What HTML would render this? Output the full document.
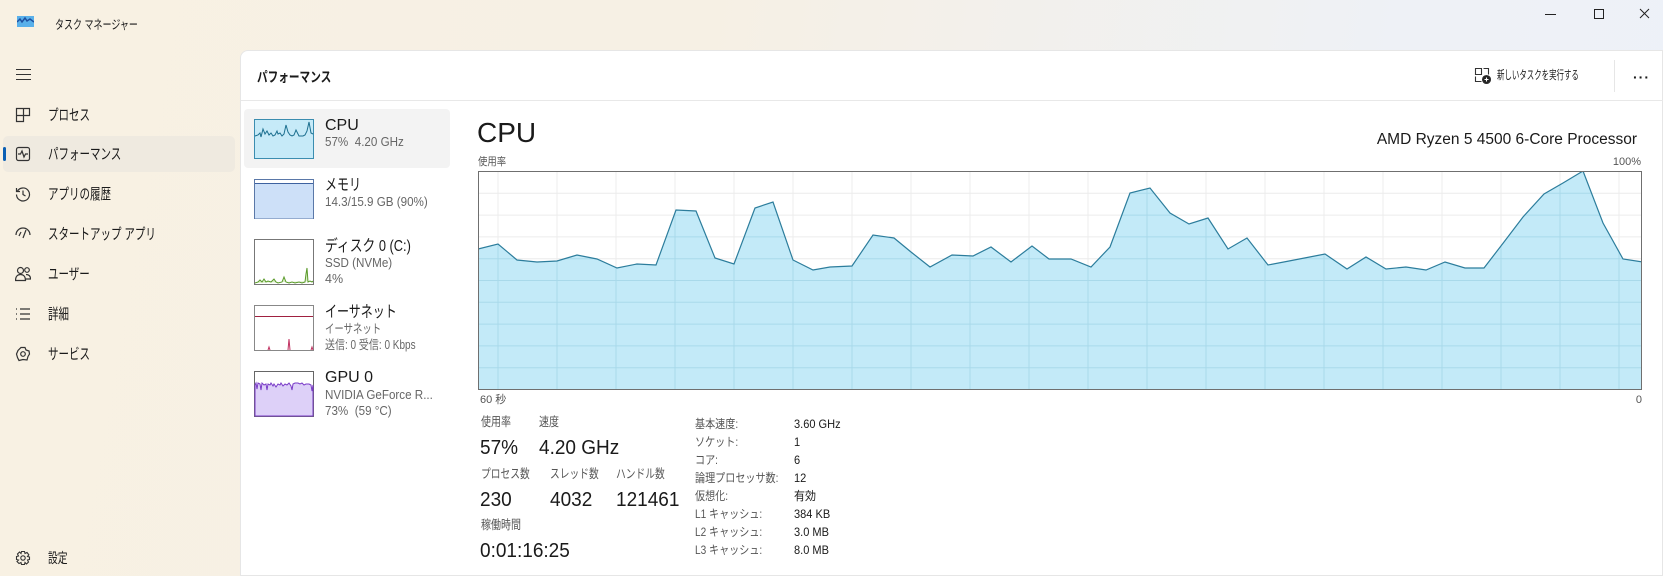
<!DOCTYPE html>
<html><head><meta charset="utf-8"><style>
*{margin:0;padding:0;box-sizing:border-box}
body{width:1663px;height:576px;overflow:hidden;position:relative;font-family:"Liberation Sans","Noto Sans CJK JP",sans-serif;color:#1a1a1a;background:linear-gradient(100deg,#f8f1e3 0%,#f6f0e4 40%,#eef1f6 80%,#edf1f8 100%)}
.a{position:absolute;white-space:nowrap;line-height:1.25;transform-origin:left top}
.nav{font-size:15px;left:48px;transform:scaleX(.7)}
.ic{position:absolute;left:15px}
.panel{position:absolute;left:240px;top:50px;width:1423px;height:526px;background:#fff;border-top-left-radius:8px;border:1px solid #e6e6e6}
.t2{font-size:12.5px;color:#666}
.lab{font-size:12.5px;color:#555}
.big{font-size:20px;color:#1a1a1a}
.rl{font-size:12px;color:#555;left:695px;transform:scaleX(.84)}
.rv{font-size:12px;color:#1a1a1a;left:794px;transform:scaleX(.92)}
</style></head><body>
<!-- title bar -->
<svg class="a" style="left:17px;top:16px" width="17" height="11"><rect width="17" height="11" fill="#59b0ea"/><path d="M0 6 L3 3 L5 6 L8 2 L10 5 L13 3 L17 6" stroke="#1d4fa0" stroke-width="1.5" fill="none"/></svg>
<div class="a" style="left:55px;top:18px;font-size:12.5px;transform:scaleX(.72)">タスク マネージャー</div>
<svg class="a" style="left:1544px;top:6px" width="110" height="16" stroke="#222" fill="none" stroke-width="1"><path d="M1 8.5 H12"/><rect x="50.5" y="3.5" width="9" height="9"/><path d="M96 3 L105 12 M105 3 L96 12"/></svg>

<!-- sidebar -->
<svg class="a" style="left:16px;top:68px" width="15" height="12" stroke="#333"><path d="M0 1.5H15M0 6.5H15M0 11.5H15"/></svg>
<svg class="ic" style="top:107px" width="16" height="16" fill="none" stroke="#333" stroke-width="1.2"><path d="M1.5 1.5H14.5V8.5H8.5V14.5H1.5Z M1.5 8.5H8.5 M8.5 1.5V8.5"/></svg>
<div class="a nav" style="top:107px">プロセス</div>
<div class="a" style="left:3px;top:136px;width:232px;height:36px;background:#efeae0;border-radius:5px"></div>
<div class="a" style="left:3px;top:147px;width:3px;height:14px;background:#0a5fb4;border-radius:2px"></div>
<svg class="ic" style="top:146px" width="16" height="16" fill="none" stroke="#333" stroke-width="1.2"><rect x="1.5" y="1.5" width="13" height="13" rx="2"/><path d="M3 8H5.5L7 5L9 11L10.5 8H13"/></svg>
<div class="a nav" style="top:146px">パフォーマンス</div>
<svg class="ic" style="top:186px" width="16" height="16" fill="none" stroke="#333" stroke-width="1.2"><path d="M2.5 5A6.5 6.5 0 1 1 1.5 8.5"/><path d="M1.5 2V5.5H5"/><path d="M8 4.5V8.5L10.5 10"/></svg>
<div class="a nav" style="top:186px">アプリの履歴</div>
<svg class="ic" style="top:226px" width="16" height="16" fill="none" stroke="#333" stroke-width="1.2"><path d="M1 9A7 7 0 0 1 15 9M8 12L11 4M4 10L6 6"/></svg>
<div class="a nav" style="top:226px">スタートアップ アプリ</div>
<svg class="ic" style="top:266px" width="16" height="16" fill="none" stroke="#333" stroke-width="1.2"><circle cx="5.5" cy="4.5" r="3"/><path d="M0.5 14.5C0.5 10 3 8.5 5.5 8.5S10.5 10 10.5 14.5Z"/><circle cx="12" cy="4" r="2.3"/><path d="M11 8.5C13.5 8.5 15.5 9.5 15.5 13H11"/></svg>
<div class="a nav" style="top:266px">ユーザー</div>
<svg class="ic" style="top:306px" width="16" height="16" fill="none" stroke="#333" stroke-width="1.2"><path d="M1 3H2M1 8H2M1 13H2M5 3H15M5 8H15M5 13H15"/></svg>
<div class="a nav" style="top:306px">詳細</div>
<svg class="ic" style="top:346px" width="16" height="16" fill="none" stroke="#333" stroke-width="1.2"><path d="M6 1.5L10 1.5L11 4L14 5L14.5 8L13 10.5L12 14L8 13.5L4 14.5L2.5 11.5L1.5 8L3 4.5Z"/><circle cx="8" cy="8" r="2.3"/></svg>
<div class="a nav" style="top:346px">サービス</div>
<svg class="ic" style="top:550px" width="16" height="16" fill="none" stroke="#333" stroke-width="1.1"><circle cx="8" cy="8" r="2.2"/><path d="M6.5 1.5H9.5L10 3.5L12 2.5L13.8 4.8L12.5 6.5L14.5 7V9.5L12.5 10L13.5 12L11.5 14L10 12.5L9.5 14.5H6.5L6 12.5L4 13.5L2 11.5L3.5 10L1.5 9.5V6.5L3.5 6L2.5 4L4.5 2L6 3.5Z"/></svg>
<div class="a nav" style="top:550px;font-size:14px">設定</div>

<!-- panel -->
<div class="panel"></div>
<div class="a" style="left:257px;top:69px;font-size:14px;font-weight:bold;transform:scaleX(.76)">パフォーマンス</div>
<div class="a" style="left:241px;top:100px;width:1422px;height:1px;background:#e8e8e8"></div>
<svg class="a" style="left:1474px;top:67px" width="17" height="17" fill="none" stroke="#333" stroke-width="1.1"><path d="M1.5 1.5H7.5V7.5H1.5Z M9.5 1.5H14.5V7.5 M1.5 9.5V14.5H7.5"/><circle cx="12.5" cy="12.5" r="4" fill="#222"/><path d="M12.5 10.5V14.5M10.5 12.5H14.5" stroke="#fff"/></svg>
<div class="a" style="left:1497px;top:68px;font-size:12px;transform:scaleX(.62)">新しいタスクを実行する</div>
<div class="a" style="left:1614px;top:60px;width:1px;height:32px;background:#e6e6e6"></div>
<div class="a" style="left:1633px;top:69px;font-size:14px;letter-spacing:1px;font-weight:bold">···</div>

<!-- list -->
<div class="a" style="left:244px;top:109px;width:206px;height:59px;background:#f3f3f3;border-radius:4px"></div>
<svg class="a" style="left:254px;top:119px" width="61" height="41"><rect x="0.5" y="0.5" width="59" height="39" fill="#c6eaf8" stroke="#3b8db0"/><path d="M1 17L4 16L6 14L7 18L9 10L11 15L13 12L15 16L17 14L19 17L21 16L23 12L24 15L26 14L28 17L30 15L32 6L34 13L36 16L38 17L40 16L42 11L45 17L49 17L51 16L53 12L55 3L57 14L59 15" stroke="#1c6f8f" fill="none" stroke-width="1"/></svg>
<div class="a" style="left:325px;top:116px;font-size:16px">CPU</div>
<div class="a t2" style="left:325px;top:135px;transform:scaleX(.93)">57%&nbsp; 4.20 GHz</div>

<svg class="a" style="left:254px;top:179px" width="61" height="41"><rect x="0.5" y="0.5" width="59" height="39" fill="#fff" stroke="#5a78a8"/><rect x="1" y="4" width="58" height="35.5" fill="#cde0f8"/><path d="M1 4.5H59" stroke="#3e62a0"/></svg>
<div class="a" style="left:325px;top:176px;font-size:16px;transform:scaleX(.75)">メモリ</div>
<div class="a t2" style="left:325px;top:195px;transform:scaleX(.93)">14.3/15.9 GB (90%)</div>

<svg class="a" style="left:254px;top:239px" width="61" height="47"><rect x="0.5" y="0.5" width="59" height="45" fill="#fff" stroke="#777"/><path d="M1 44L4 43L6 41L8 43L10 40L12 43L14 42L17 43L20 40L22 43L24 44L28 43L30 38L32 43L35 44L38 43L41 44L45 43L48 44L51 43L52 35L53 29L54 43L56 42L58 43L59 42" stroke="#5a9a2a" fill="#d9edc4"/></svg>
<div class="a" style="left:325px;top:237px;font-size:16px;transform:scaleX(.8)">ディスク 0 (C:)</div>
<div class="a t2" style="left:325px;top:256px;transform:scaleX(.93)">SSD (NVMe)</div>
<div class="a t2" style="left:325px;top:272px">4%</div>

<svg class="a" style="left:254px;top:305px" width="61" height="47"><rect x="0.5" y="0.5" width="59" height="45" fill="#fff" stroke="#888"/><path d="M1 11.5H59" stroke="#a02040"/><path d="M14 45L15 42L16 45M34 45L35 34L36 45M57 45L58 42L59 45" stroke="#c03060" fill="none"/></svg>
<div class="a" style="left:325px;top:303px;font-size:16px;transform:scaleX(.75)">イーサネット</div>
<div class="a t2" style="left:325px;top:322px;transform:scaleX(.75)">イーサネット</div>
<div class="a t2" style="left:325px;top:338px;transform:scaleX(.8)">送信: 0 受信: 0 Kbps</div>

<svg class="a" style="left:254px;top:371px" width="61" height="47"><rect x="0.5" y="0.5" width="59" height="45" fill="#fff" stroke="#666"/><path d="M1 14L2 12L3 18L4 12L6 13L7 19L8 12L10 14L12 13L13 19L14 13L16 14L17 12L19 15L20 13L22 16L24 13L26 14L27 12L29 15L31 13L33 14L35 12L37 15L38 19L39 13L41 12L44 12L46 13L48 12L50 14L52 13L55 13L57 14L58 20L59 14V45H1Z" fill="#ddd0f8" stroke="#7a3cc8"/></svg>
<div class="a" style="left:325px;top:368px;font-size:16px">GPU 0</div>
<div class="a t2" style="left:325px;top:388px;transform:scaleX(.93)">NVIDIA GeForce R...</div>
<div class="a t2" style="left:325px;top:404px;transform:scaleX(.93)">73%&nbsp; (59 °C)</div>

<!-- main -->
<div class="a" style="left:477px;top:115px;font-size:28px">CPU</div>
<div class="a" style="left:1637px;top:130px;font-size:15.5px;transform:translateX(-100%)">AMD Ryzen 5 4500 6-Core Processor</div>
<div class="a lab" style="left:478px;top:156px;font-size:11px;transform:scaleX(.85)">使用率</div>
<div class="a lab" style="left:1641px;top:156px;font-size:11px;transform:translateX(-100%)">100%</div>

<svg class="a" style="left:478px;top:171px" width="1164" height="219">
<defs><clipPath id="c"><path d="M0 78L20 73L39 89L59 91L79 90L99 84L119 88L139 97L159 93L178 94L198 39L218 40L237 87L256 93L277 37L295 31L315 89L335 99L352 96L374 95L395 64L416 67L433 81L452 96L474 84L495 85L513 76L533 91L554 75L571 88L593 88L613 96L632 76L652 22L672 17L692 42L711 53L730 47L750 78L769 67L790 94L811 90L847 83L869 98L888 86L908 98L928 96L948 99L967 91L987 97L1006 97L1026 71L1045 46L1066 23L1085 12L1105 0L1125 52L1145 88L1165 91L1164 95V219H0Z"/></clipPath></defs>
<rect width="1164" height="219" fill="#fff"/>
<g stroke="#ececec" stroke-width="1">
<path d="M0 22.3H1164M0 44.1H1164M0 65.9H1164M0 87.7H1164M0 109.5H1164M0 131.3H1164M0 153.1H1164M0 174.9H1164M0 196.7H1164"/>
<path d="M20 0V219M79 0V219M138 0V219M197 0V219M256 0V219M315 0V219M374 0V219M433 0V219M492 0V219M551 0V219M610 0V219M669 0V219M728 0V219M787 0V219M846 0V219M905 0V219M964 0V219M1023 0V219M1082 0V219M1141 0V219"/>
</g>
<g clip-path="url(#c)">
<rect width="1164" height="219" fill="#c3eaf8"/>
<g stroke="#a9d9ea" stroke-width="1">
<path d="M0 22.3H1164M0 44.1H1164M0 65.9H1164M0 87.7H1164M0 109.5H1164M0 131.3H1164M0 153.1H1164M0 174.9H1164M0 196.7H1164"/>
<path d="M20 0V219M79 0V219M138 0V219M197 0V219M256 0V219M315 0V219M374 0V219M433 0V219M492 0V219M551 0V219M610 0V219M669 0V219M728 0V219M787 0V219M846 0V219M905 0V219M964 0V219M1023 0V219M1082 0V219M1141 0V219"/>
</g></g>
<path d="M0 78L20 73L39 89L59 91L79 90L99 84L119 88L139 97L159 93L178 94L198 39L218 40L237 87L256 93L277 37L295 31L315 89L335 99L352 96L374 95L395 64L416 67L433 81L452 96L474 84L495 85L513 76L533 91L554 75L571 88L593 88L613 96L632 76L652 22L672 17L692 42L711 53L730 47L750 78L769 67L790 94L811 90L847 83L869 98L888 86L908 98L928 96L948 99L967 91L987 97L1006 97L1026 71L1045 46L1066 23L1085 12L1105 0L1125 52L1145 88L1165 91" fill="none" stroke="#2c7d9c" stroke-width="1.2"/>
<rect x="0.5" y="0.5" width="1163" height="218" fill="none" stroke="#6f6f6f"/>
</svg>
<div class="a lab" style="left:480px;top:394px;font-size:11px">60 秒</div>
<div class="a lab" style="left:1642px;top:394px;font-size:11px;transform:translateX(-100%)">0</div>

<div class="a lab" style="left:481px;top:415px;transform:scaleX(.8)">使用率</div>
<div class="a lab" style="left:539px;top:415px;transform:scaleX(.8)">速度</div>
<div class="a big" style="left:480px;top:436px;transform:scaleX(.95)">57%</div>
<div class="a big" style="left:539px;top:436px;transform:scaleX(.95)">4.20 GHz</div>
<div class="a lab" style="left:481px;top:467px;transform:scaleX(.78)">プロセス数</div>
<div class="a lab" style="left:550px;top:467px;transform:scaleX(.78)">スレッド数</div>
<div class="a lab" style="left:616px;top:467px;transform:scaleX(.78)">ハンドル数</div>
<div class="a big" style="left:480px;top:488px;transform:scaleX(.95)">230</div>
<div class="a big" style="left:550px;top:488px;transform:scaleX(.95)">4032</div>
<div class="a big" style="left:616px;top:488px;transform:scaleX(.95)">121461</div>
<div class="a lab" style="left:481px;top:518px;transform:scaleX(.8)">稼働時間</div>
<div class="a big" style="left:480px;top:539px;transform:scaleX(.95)">0:01:16:25</div>

<div class="a rl" style="top:417px">基本速度:</div><div class="a rv" style="top:417px">3.60 GHz</div>
<div class="a rl" style="top:435px">ソケット:</div><div class="a rv" style="top:435px">1</div>
<div class="a rl" style="top:453px">コア:</div><div class="a rv" style="top:453px">6</div>
<div class="a rl" style="top:471px">論理プロセッサ数:</div><div class="a rv" style="top:471px">12</div>
<div class="a rl" style="top:489px">仮想化:</div><div class="a rv" style="top:489px">有効</div>
<div class="a rl" style="top:507px">L1 キャッシュ:</div><div class="a rv" style="top:507px">384 KB</div>
<div class="a rl" style="top:525px">L2 キャッシュ:</div><div class="a rv" style="top:525px">3.0 MB</div>
<div class="a rl" style="top:543px">L3 キャッシュ:</div><div class="a rv" style="top:543px">8.0 MB</div>
</body></html>
